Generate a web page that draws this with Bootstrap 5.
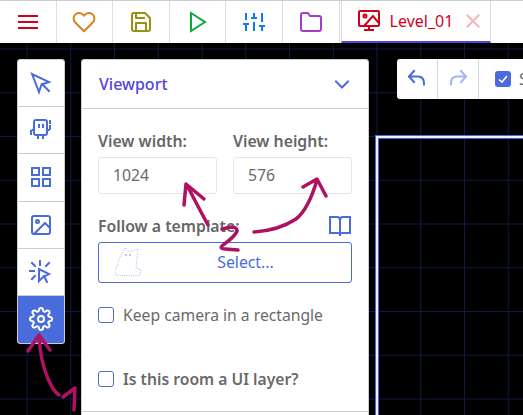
<!DOCTYPE html>
<html lang="en">
<head>
<meta charset="utf-8">
<title>Level_01</title>
<link href="https://cdn.jsdelivr.net/npm/bootstrap@5.3.0/dist/css/bootstrap.min.css" rel="stylesheet">
<style>
html,body{height:415px;overflow:hidden;}
body{font-family:"Noto Sans","Open Sans",sans-serif;background:#000;color:#666;}
svg.ico{fill:none;stroke:currentColor;stroke-width:2;stroke-linecap:square;stroke-linejoin:miter;display:block;}
.topbar{height:43px;background:#fff;border-top:1px solid #c9ced3;}
.tool{width:56.6px;border-right:1px solid #dcdfe2;flex:none;}
.doc-tab{width:150px;margin-left:1px;padding-left:15px;border-left:1px solid #dcdfe2;border-right:1px solid #dcdfe2;border-bottom:2px solid #5144dd;color:#d0021b;font-size:16px;gap:9px;}
.doc-x{color:#f4b5bb;margin-left:4px;}
.stage{height:372px;position:relative;overflow:hidden;padding:16px 0 0 17px;background-color:#000;
background-image:linear-gradient(#121a42 1px,transparent 1px),linear-gradient(90deg,#121a42 1px,transparent 1px);
background-size:43.75px 43.75px;background-position:26.5px 5.5px;}
.rail{width:48px;height:285px;background:#fff;border-radius:3px;border:1px solid #c9ced3;overflow:hidden;flex:none;color:#4a6bdc;}
.rail-item{height:47.4px;border-bottom:1px solid #c9ced3;}
.rail-item:last-child{border-bottom:0;background:#4a6bdc;color:#fff;}
.side-panel{width:288px;height:400px;margin-left:16px;background:#fff;border-radius:3px;border:1px solid #c9ced3;flex:none;}
.panel-head{height:49px;padding:0 17px;border-bottom:1px solid #c9ced3;font-weight:500;font-size:16px;color:#5144dd;}
.panel-body{padding:20px 16px 0;}
.fld-label{font-weight:600;font-size:15.8px;line-height:24px;margin-bottom:4px;color:#666;}
.fld-input{height:37px;border:1px solid #e3e5e8;border-radius:3px;padding:0 14px;font-size:15.8px;color:#6a6a6a;background:#fff;line-height:35px;}
.tpl-row{margin-top:20px;height:24px;}
.tpl-btn{height:41px;margin-top:4px;padding-left:41px;border:1px solid #4a6bdc;border-radius:3px;color:#4a6bdc;font-size:15.8px;position:relative;background:#fff;}
.tpl-cat{position:absolute;left:16px;top:4px;}
.chk{width:16px;height:16px;border:1.5px solid #4a6bdc;border-radius:3px;flex:none;background:#fff;}
.chk-row{gap:9px;font-size:15.7px;line-height:24px;color:#6a6a6a;}
.chk-row.one{margin-top:20px;}
.chk-row.two{margin-top:40px;font-weight:600;}
.panel-rule{border-top:1px solid #c9ced3;margin-top:20px;margin-left:-16px;margin-right:-16px;}
.undo-bar{position:absolute;left:397px;top:16px;width:200px;height:40px;background:#fff;border-radius:3px;color:#4a6bdc;}
.undo-btn{width:41px;flex:none;border-right:1px solid #d3d6da;}
.undo-btn.off{color:#a3b7f2;}
.tick{width:16px;height:16px;border-radius:3px;background:#4a6bdc;margin-left:16px;flex:none;}
.undo-txt{margin-left:8px;font-size:16px;color:#666;white-space:nowrap;}
.room{position:absolute;left:376px;top:93px;width:300px;height:300px;border:2px solid #eef1ff;box-shadow:0 0 0 1px #4a6bdc,inset 0 0 0 1px #3f5fd0;}
.scribble{position:absolute;left:0;top:0;pointer-events:none;fill:none;stroke:#ae1261;stroke-width:3.5;stroke-linecap:round;stroke-linejoin:round;}
</style>
</head>
<body>
<div class="topbar d-flex">
  <div class="tool d-flex align-items-center justify-content-center" style="color:#d0021b"><svg class="ico" width="24" height="24" viewBox="0 0 24 24"><path d="M3 6h18M3 12h18M3 18h18"/></svg></div>
  <div class="tool d-flex align-items-center justify-content-center" style="color:#dd7f1d"><svg class="ico" width="24" height="24" viewBox="0 0 24 24"><path stroke-linejoin="round" d="M20.8 4.6a5.5 5.5 0 0 0-7.8 0L12 5.7l-1-1.1a5.5 5.5 0 0 0-7.8 7.8l1 1.1L12 21.2l7.8-7.7 1-1.1a5.5 5.5 0 0 0 0-7.8z"/></svg></div>
  <div class="tool d-flex align-items-center justify-content-center" style="color:#9a9012"><svg class="ico" width="24" height="24" viewBox="0 0 24 24"><path stroke-linejoin="round" d="M19 21H5a2 2 0 0 1-2-2V5a2 2 0 0 1 2-2h11l5 5v11a2 2 0 0 1-2 2zM17 21v-8H7v8M7 3v5h8"/></svg></div>
  <div class="tool d-flex align-items-center justify-content-center" style="color:#0aa83f"><svg class="ico" width="24" height="24" viewBox="0 0 24 24"><path d="M5 3l14 9-14 9V3z"/></svg></div>
  <div class="tool d-flex align-items-center justify-content-center" style="color:#0d7bf2"><svg class="ico" width="24" height="24" viewBox="0 0 24 24"><path stroke-linecap="butt" d="M4 21v-7M4 10V3M12 21v-9M12 8V3M20 21v-5M20 12V3M1 14h6M9 8h6M17 16h6"/></svg></div>
  <div class="tool d-flex align-items-center justify-content-center" style="color:#a33cc6"><svg class="ico" width="24" height="24" viewBox="0 0 24 24"><path stroke-linejoin="round" d="M22 19a2 2 0 0 1-2 2H4a2 2 0 0 1-2-2V5a2 2 0 0 1 2-2h5l2 3h9a2 2 0 0 1 2 2z"/></svg></div>
  <div class="doc-tab d-flex align-items-center">
    <svg class="ico" width="24" height="24" viewBox="0 0 24 24"><rect x="2" y="2" width="20" height="15" rx="1"/><circle cx="8" cy="7" r="1.5"/><path d="M21 13l-5-6-9 10M8 21h8M12 17v4"/></svg>
    <span>Level_01</span>
    <svg class="ico doc-x" width="14" height="14" viewBox="0 0 14 14"><path d="M1.5 1.5l11 11M12.5 1.5l-11 11"/></svg>
  </div>
</div>
<div class="stage d-flex align-items-start">
  <div class="room"></div>
  <div class="rail d-flex flex-column">
    <div class="rail-item d-flex align-items-center justify-content-center"><svg class="ico" width="24" height="24" viewBox="0 0 24 24"><path d="M3 3l7 18 2.5-7.5L20 11 3 3zM13 13l7 7"/></svg></div>
    <div class="rail-item d-flex align-items-center justify-content-center"><svg class="ico" width="24" height="24" viewBox="0 0 24 24"><path stroke-linejoin="round" d="M5 4a2 2 0 0 1 2-2h9a2 2 0 0 1 2 2v11a2 2 0 0 1-2 2H7a2 2 0 0 1-2-2zM2 13v3M5 11L2 13M18 13l3-2V8M21 3v2M9 17v3M14 17v3M10 7v2M14 7v2"/></svg></div>
    <div class="rail-item d-flex align-items-center justify-content-center"><svg class="ico" width="24" height="24" viewBox="0 0 24 24"><rect x="3" y="3" width="7" height="7"/><rect x="14" y="3" width="7" height="7"/><rect x="14" y="14" width="7" height="7"/><rect x="3" y="14" width="7" height="7"/></svg></div>
    <div class="rail-item d-flex align-items-center justify-content-center"><svg class="ico" width="24" height="24" viewBox="0 0 24 24"><rect x="3" y="3" width="18" height="18" rx="2"/><circle cx="8.5" cy="8.5" r="1.5"/><path d="M21 15l-5-5L5 21"/></svg></div>
    <div class="rail-item d-flex align-items-center justify-content-center"><svg class="ico" width="24" height="24" viewBox="0 0 24 24"><path d="M10 9v12l4-4 6-3-10-5zM15 16l3 6M11 1v4M1 11h4M3 3l3 3M20 3l-3 3M3 19l3-3"/></svg></div>
    <div class="rail-item d-flex align-items-center justify-content-center"><svg class="ico" width="24" height="24" viewBox="0 0 24 24"><circle cx="12" cy="12" r="3"/><path stroke-linejoin="round" d="M19.4 15a1.7 1.7 0 0 0 .3 1.8l.1.1a2 2 0 1 1-2.8 2.8l-.1-.1a1.7 1.7 0 0 0-2.9 1.2v.2a2 2 0 0 1-4 0v-.1a1.7 1.7 0 0 0-2.9-1.2l-.1.1a2 2 0 1 1-2.8-2.8l.1-.1a1.7 1.7 0 0 0-1.2-2.9H3a2 2 0 0 1 0-4h.1a1.7 1.7 0 0 0 1.2-2.9l-.1-.1a2 2 0 1 1 2.8-2.8l.1.1a1.7 1.7 0 0 0 2.9-1.2V3a2 2 0 0 1 4 0v.1a1.7 1.7 0 0 0 2.9 1.2l.1-.1a2 2 0 1 1 2.8 2.8l-.1.1a1.7 1.7 0 0 0 1.2 2.9h.2a2 2 0 0 1 0 4h-.1a1.7 1.7 0 0 0-1.5 1z"/></svg></div>
  </div>
  <div class="side-panel">
    <div class="panel-head d-flex align-items-center justify-content-between">
      <span>Viewport</span>
      <svg class="ico" style="color:#4a6bdc" width="18" height="18" viewBox="0 0 18 18"><path d="M3 6.5l6 6 6-6"/></svg>
    </div>
    <div class="panel-body">
      <div class="row g-0" style="column-gap:16px">
        <div class="col"><div class="fld-label">View width:</div><div class="fld-input">1024</div></div>
        <div class="col"><div class="fld-label">View height:</div><div class="fld-input">576</div></div>
      </div>
      <div class="tpl-row d-flex justify-content-between align-items-center">
        <span class="fld-label mb-0">Follow a template:</span>
        <svg class="ico" style="color:#4a6bdc" width="24" height="24" viewBox="0 0 24 24"><path d="M12 21V6a3 3 0 0 0-3-3H2v16h8a2 2 0 0 1 2 2 2 2 0 0 1 2-2h8V3h-7a3 3 0 0 0-3 3"/></svg>
      </div>
      <div class="tpl-btn d-flex align-items-center justify-content-center">
        <svg class="tpl-cat" width="28" height="32" viewBox="0 0 28 32" fill="none" stroke="#a9bbef" stroke-width="1" stroke-dasharray="1 1.2"><path d="M10 1l5 4 8-3-2 19 5 2-1 5-5 1-19-1-1-4 5-14z"/><path stroke="#6f8ce6" stroke-dasharray="none" d="M11 7v2M15 7v2"/></svg>
        <span>Select...</span>
      </div>
      <div class="chk-row one d-flex align-items-center"><span class="chk"></span><span>Keep camera in a rectangle</span></div>
      <div class="chk-row two d-flex align-items-center"><span class="chk"></span><span>Is this room a UI layer?</span></div>
      <div class="panel-rule"></div>
    </div>
  </div>
  <div class="undo-bar d-flex">
    <div class="undo-btn d-flex align-items-center justify-content-center"><svg class="ico" width="20" height="20" viewBox="0 0 20 20"><path d="M7 2L2 7.5 7 13M2 7.5h9c4 0 6 3 6 7v1"/></svg></div>
    <div class="undo-btn off d-flex align-items-center justify-content-center"><svg class="ico" width="20" height="20" viewBox="0 0 20 20"><path d="M13 2l5 5.5-5 5.5M18 7.5H9c-4 0-6 3-6 7v1"/></svg></div>
    <div class="d-flex align-items-center">
      <span class="tick d-flex align-items-center justify-content-center"><svg width="12" height="12" viewBox="0 0 12 12" fill="none" stroke="#fff" stroke-width="1.6"><path d="M2 6.5l3 2.5 5-6"/></svg></span>
      <span class="undo-txt">Snap</span>
    </div>
  </div>
</div>
<svg class="scribble" width="523" height="415" viewBox="0 0 523 415">
  <path d="M39 336c1 18 4 32 10 45 3 7 6 11 10 14M28 351l11-16 11 15M63 397l12-9-1 22"/>
  <path d="M208 225c-7-13-14-26-21-40M184 205l2-21 18 15"/>
  <path d="M222 229l9-2c6 0 7 3 5 6-3 5-9 9-14 13-2 2 0 3 3 3l13 1"/>
  <path d="M254 232c15-1 30-5 42-13 9-7 16-22 21-39M303 187l14-8 9 17"/>
</svg>
<script src="https://cdn.jsdelivr.net/npm/bootstrap@5.3.0/dist/js/bootstrap.bundle.min.js"></script>
</body>
</html>
